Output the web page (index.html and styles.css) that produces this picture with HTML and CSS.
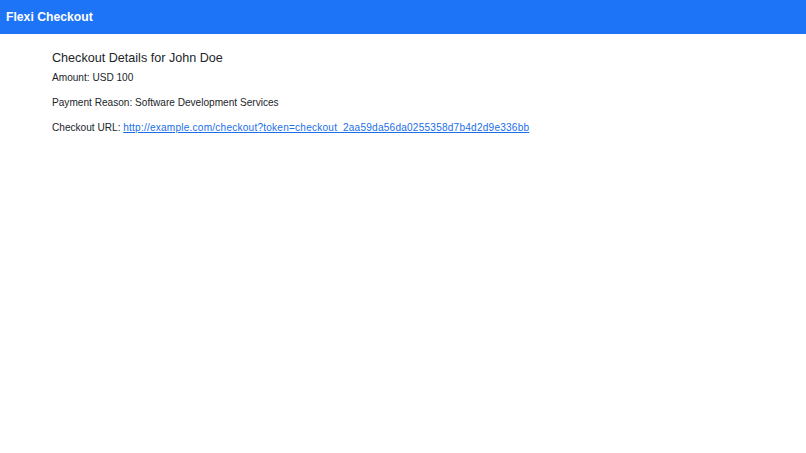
FILE: index.html
```html
<!DOCTYPE html>
<html lang="en">
<head>
<meta charset="utf-8">
<title>Flexi Checkout</title>
<link rel="stylesheet" href="styles.css">
</head>
<body>
<header class="topbar">
  <span class="brand">Flexi Checkout</span>
</header>
<main class="content">
  <h2 class="title">Checkout Details for John Doe</h2>
  <p class="line">Amount: USD 100</p>
  <p class="line">Payment Reason: Software Development Services</p>
  <p class="line">Checkout URL: <a class="link" href="#">http://example.com/checkout?token=checkout_2aa59da56da0255358d7b4d2d9e336bb</a></p>
</main>
</body>
</html>
```
FILE: styles.css
```css
html, body {
  margin: 0;
  padding: 0;
  background: #ffffff;
  font-family: "Liberation Sans", Arial, sans-serif;
  color: #212529;
}
.topbar {
  height: 34px;
  background: #1e74f6;
  display: flex;
  align-items: center;
  padding: 0 6px;
}
.brand {
  color: #ffffff;
  font-weight: bold;
  font-size: 12.2px;
}
.content {
  padding: 16px 52px;
}
.title {
  margin: 0 0 4px 0;
  font-size: 12.6px;
  font-weight: normal;
  line-height: 16px;
  color: #212529;
}
.line {
  margin: 0 0 10px 0;
  font-size: 10.1px;
  line-height: 15px;
}
.link {
  color: #1a6fe8;
  text-decoration: underline;
  letter-spacing: 0.21px;
}
```
